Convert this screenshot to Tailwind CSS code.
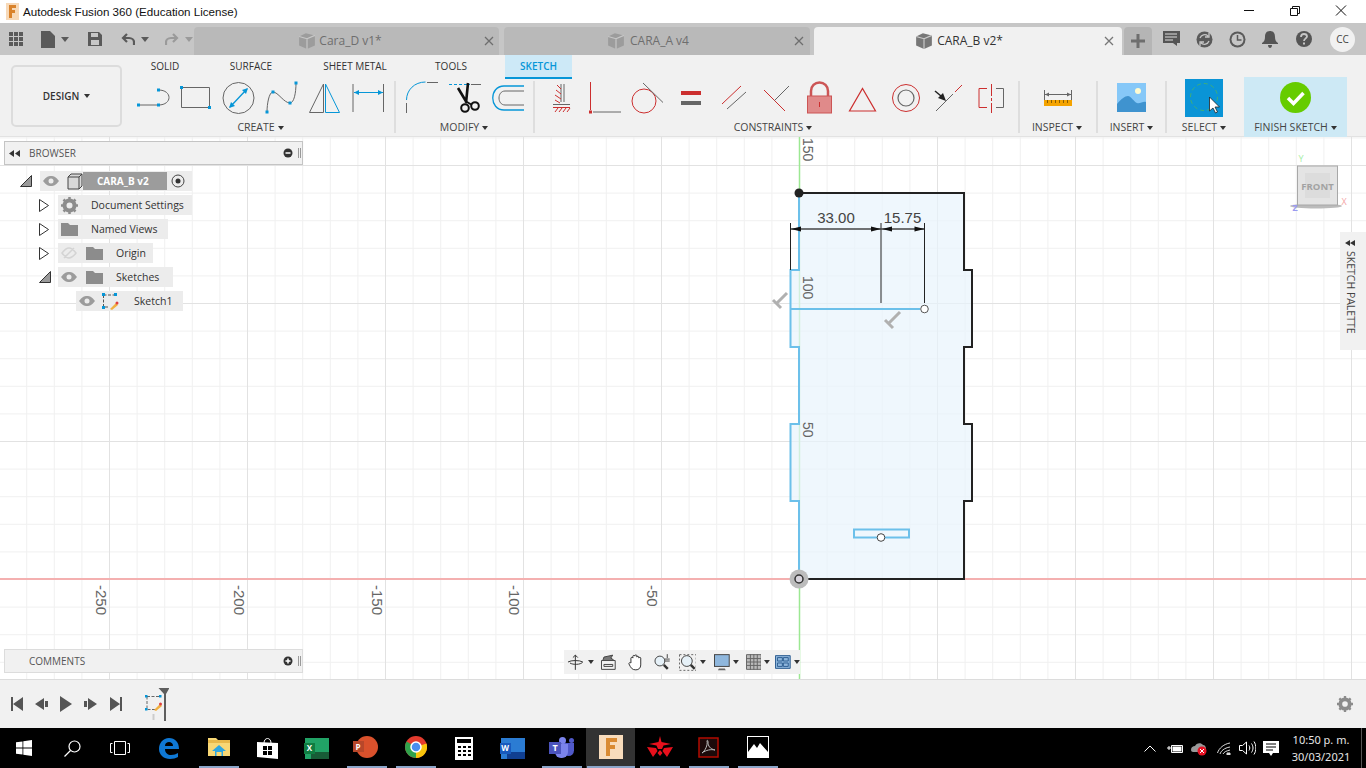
<!DOCTYPE html>
<html lang="en">
<head>
  <meta charset="UTF-8" />
  <title>Autodesk Fusion 360 (Education License)</title>
  <script src="https://cdn.jsdelivr.net/npm/@tailwindcss/browser@4"></script>
</head>
<body class="w-[1366px] h-[768px] overflow-hidden bg-white font-['Open_Sans',sans-serif] text-[#3c3c3c]">
<div class="flex flex-col h-[768px]">

  <!-- Title bar -->
  <div class="h-[23px] bg-white flex items-center shrink-0">
    <svg class="ml-[6px] w-[13px] h-[17px]" viewBox="0 0 13 17">
      <rect width="13" height="17" fill="#f7d9b8"/>
      <path d="M3 2h7v3H6v2h3v3H6v5H3z" fill="#d9822b"/>
    </svg>
    <span class="ml-[4px] text-[11.600px] text-[#111] font-['Liberation_Sans',sans-serif]">Autodesk Fusion 360 (Education License)</span>
    <div class="ml-auto mr-[2px] flex items-center">
      <svg class="w-[46px] h-[23px]" viewBox="0 0 46 23"><path d="M18 10.500h10" stroke="#111"/></svg>
      <svg class="w-[46px] h-[23px]" viewBox="0 0 46 23" fill="none" stroke="#111"><path d="M18.500 8.500h7v7h-7zM20.500 8.500v-2h7v7h-2"/></svg>
      <svg class="w-[46px] h-[23px]" viewBox="0 0 46 23" fill="none" stroke="#111"><path d="M18 5.500l10 10M28 5.500l-10 10"/></svg>
    </div>
  </div>

  <!-- Tab strip -->
  <div class="h-[32px] bg-[#c6c6c6] flex items-end shrink-0">
    <div class="w-[194px] h-[32px] flex items-center">
      <svg class="ml-[9px] w-[14px] h-[14px]" viewBox="0 0 14 14" fill="#5a5a5a"><path d="M0 0h4v4H0zM5 0h4v4H5zM10 0h4v4h-4zM0 5h4v4H0zM5 5h4v4H5zM10 5h4v4h-4zM0 10h4v4H0zM5 10h4v4H5zM10 10h4v4h-4z"/></svg>
      <svg class="ml-[18px] w-[14px] h-[17px]" viewBox="0 0 14 17" fill="#5a5a5a"><path d="M0 0h9l5 5v12H0z"/></svg>
      <svg class="ml-[6px] w-[8px] h-[5px]" viewBox="0 0 8 5" fill="#5a5a5a"><path d="M0 0h8L4 5z"/></svg>
      <svg class="ml-[19px] w-[14px] h-[14px]" viewBox="0 0 14 14" fill="#5a5a5a"><path d="M0 0h11l3 3v11H0zM3 1v4h7V1zM3 8v5h8V8z"/></svg>
      <svg class="ml-[19px] w-[14px] h-[13px]" viewBox="0 0 14 13" fill="none" stroke="#5a5a5a" stroke-width="2.200"><path d="M6 1L2 5l4 4M2 5h6c3 0 5 2 5 4v3"/></svg>
      <svg class="ml-[6px] w-[8px] h-[5px]" viewBox="0 0 8 5" fill="#5a5a5a"><path d="M0 0h8L4 5z"/></svg>
      <svg class="ml-[16px] w-[14px] h-[13px]" viewBox="0 0 14 13" fill="none" stroke="#9a9a9a" stroke-width="2.200"><path d="M8 1l4 4-4 4M12 5H6C3 5 1 7 1 9v3"/></svg>
      <svg class="ml-[6px] w-[8px] h-[5px]" viewBox="0 0 8 5" fill="#9a9a9a"><path d="M0 0h8L4 5z"/></svg>
    </div>
    <div class="w-[305px] h-[28px] pr-[13px] bg-[#b9b9b9] rounded-t-[4px] flex items-center relative justify-center">
      <svg class="w-[18px] h-[18px] mr-[3px]" viewBox="0 0 16 16"><path d="M1 4l6-3 8 2v9l-7 3-7-3z" fill="#9c9c9c"/><path d="M1 4l7 2 7-3-7 3v9" fill="none" stroke="#c8c8c8"/></svg>
      <span class="text-[12px] text-[#6e6e6e]">Cara_D v1*</span>
      <svg class="absolute right-[5px] top-[9px] w-[10px] h-[10px]" viewBox="0 0 10 10" stroke="#6e6e6e" stroke-width="1.300"><path d="M1 1l8 8M9 1l-8 8"/></svg>
    </div>
    <div class="ml-[5px] w-[306px] h-[28px] pr-[18px] bg-[#b9b9b9] rounded-t-[4px] flex items-center relative justify-center">
      <svg class="w-[18px] h-[18px] mr-[5px]" viewBox="0 0 16 16"><path d="M1 4l6-3 8 2v9l-7 3-7-3z" fill="#9c9c9c"/><path d="M1 4l7 2 7-3-7 3v9" fill="none" stroke="#c8c8c8"/></svg>
      <span class="text-[12px] text-[#6e6e6e]">CARA_A v4</span>
      <svg class="absolute right-[6px] top-[9px] w-[10px] h-[10px]" viewBox="0 0 10 10" stroke="#6e6e6e" stroke-width="1.300"><path d="M1 1l8 8M9 1l-8 8"/></svg>
    </div>
    <div class="ml-[4px] w-[308px] h-[28px] pr-[18px] bg-[#f1f1f1] rounded-t-[4px] flex items-center relative justify-center">
      <svg class="w-[18px] h-[18px] mr-[4px]" viewBox="0 0 16 16"><path d="M1 4l6-3 8 2v9l-7 3-7-3z" fill="#777"/><path d="M1 4l7 2 7-3-7 3v9" fill="none" stroke="#ccc"/></svg>
      <span class="text-[12px] text-[#333]">CARA_B v2*</span>
      <svg class="absolute right-[8px] top-[9px] w-[10px] h-[10px]" viewBox="0 0 10 10" stroke="#777" stroke-width="1.300"><path d="M1 1l8 8M9 1l-8 8"/></svg>
    </div>
    <div class="ml-[2px] w-[28px] h-[28px] bg-[#b5b5b5] rounded-t-[4px] flex items-center justify-center">
      <svg class="w-[14px] h-[14px]" viewBox="0 0 14 14" fill="#6e6e6e"><path d="M5.500 0h3v5.500H14v3H8.500V14h-3V8.500H0v-3h5.500z"/></svg>
    </div>
    <div class="h-[32px] flex items-center">
      <svg class="ml-[11px] w-[17px] h-[16px]" viewBox="0 0 17 16"><path d="M0 0h17v12h-3v3l-4-3H0z" fill="#555"/><path d="M2 3h12M2 6h12M2 9h8" stroke="#ddd"/></svg>
      <svg class="ml-[16px] w-[17px] h-[17px]" viewBox="0 0 17 17"><circle cx="8.500" cy="8.500" r="8" fill="#5a5a5a"/><path d="M4 7a5 5 0 0 1 8-2M13 10a5 5 0 0 1-8 2M13 2v4H9M4 15v-4h4" fill="none" stroke="#c6c6c6" stroke-width="1.300"/></svg>
      <svg class="ml-[16px] w-[17px] h-[17px]" viewBox="0 0 17 17"><circle cx="8.500" cy="8.500" r="8" fill="#5a5a5a"/><circle cx="8.500" cy="8.500" r="6" fill="#c6c6c6"/><path d="M8.500 4v5h4" fill="none" stroke="#5a5a5a" stroke-width="1.500"/></svg>
      <svg class="ml-[16px] w-[16px] h-[17px]" viewBox="0 0 16 17" fill="#555"><path d="M8 0c4 0 5 3 5 6 0 3 1 5 3 6v1H0v-1c2-1 3-3 3-6 0-3 1-6 5-6zM6 14h4c0 2-1 3-2 3s-2-1-2-3z"/></svg>
      <svg class="ml-[18px] w-[16px] h-[16px]" viewBox="0 0 16 16"><circle cx="8" cy="8" r="8" fill="#555"/><path d="M5 6c0-2 1.500-3 3-3s3 1 3 2.500S8 8 8 10" fill="none" stroke="#c6c6c6" stroke-width="1.800"/><rect x="7" y="11.500" width="2" height="2" fill="#c6c6c6"/></svg>
      <div class="ml-[18px] w-[25px] h-[25px] rounded-full bg-[#f1f1f1] flex items-center justify-center text-[10px] text-[#444]">CC</div>
    </div>
  </div>

  <!-- Toolbar -->
  <div class="h-[82px] bg-[#f1f1f1] flex shrink-0 border-b border-[#e2e2e2]">
    <div class="ml-[11px] mt-[10px] w-[111px] h-[62px] border-2 border-[#dcdcdc] rounded-[5px] flex items-center justify-center gap-[5px] text-[10px] font-semibold text-[#333]">
      DESIGN
      <svg class="w-[6px] h-[4px]" viewBox="0 0 6 4" fill="#333"><path d="M0 0h6L3 4z"/></svg>
    </div>
    <div class="ml-[11px] flex flex-col w-[1222px]">
      <div class="h-[24px] flex items-start text-[10px] text-[#333]">
        <div class="w-[64px] h-[22px] flex items-center justify-center">SOLID</div>
        <div class="w-[108px] h-[22px] flex items-center justify-center">SURFACE</div>
        <div class="w-[100px] h-[22px] flex items-center justify-center">SHEET METAL</div>
        <div class="w-[92px] h-[22px] flex items-center justify-center">TOOLS</div>
        <div class="ml-[8px] w-[67px] h-[24px] bg-[#cde9f7] border-b-2 border-[#0696d7] flex items-center justify-center font-semibold text-[#0696d7]">SKETCH</div>
      </div>
      <div class="flex items-start h-[58px]">

        <!-- Create -->
        <div class="w-[259px] flex flex-col items-center">
          <div class="flex h-[37px] pt-[1px]">
            <svg class="w-[42px] h-[36px]" viewBox="133 80 42 36" fill="none" stroke="#666"><path d="M139 105h19.500M158.500 90c14 0 14 15 0 15"/><path d="M137 103.500h3v3h-3zM157 103.500h3v3h-3zM157 88.500h3v3h-3z" fill="#0696d7" stroke="none"/></svg>
            <svg class="w-[41px] h-[36px]" viewBox="175 80 41 36" fill="none" stroke="#666"><path d="M181.500 87.500h28v20h-28z"/><path d="M180 86h3v3h-3zM208 106h3v3h-3z" fill="#0696d7" stroke="none"/></svg>
            <svg class="w-[45px] h-[36px]" viewBox="216 80 45 36" fill="none"><circle cx="238.500" cy="98" r="15.500" stroke="#666"/><path d="M230 107l17-18" stroke="#0696d7" stroke-width="1.300"/><path d="M229 108l2-6 4 4zM248 88l-2 6-4-4z" fill="#0696d7"/></svg>
            <svg class="w-[42px] h-[36px]" viewBox="261 80 42 36" fill="none" stroke="#666"><path d="M267 112c0-8 2-20 6-20 5 0 11 11 17 11 4 0 6-10 6-20"/><path d="M265.500 110.500h3v3h-3zM271.500 90.500h3v3h-3zM288.500 101.500h3v3h-3zM294.500 81.500h3v3h-3z" fill="#0696d7" stroke="none"/></svg>
            <svg class="w-[43px] h-[36px]" viewBox="303 80 43 36" fill="none"><path d="M309.500 112.500L323.500 84v28.500z" stroke="#666"/><path d="M325.500 84l14 28.500h-14z" stroke="#0696d7"/></svg>
            <svg class="w-[46px] h-[36px]" viewBox="346 80 46 36" fill="none"><path d="M353 84v28M383.500 84v28" stroke="#666"/><path d="M354 92.500h29" stroke="#0696d7"/><path d="M354 92.500l5-2.500v5zM383 92.500l-5-2.500v5z" fill="#0696d7"/></svg>
          </div>
          <div class="mt-[5px] mr-[4px] h-[14px] flex items-center gap-[3px] text-[10.500px] text-[#444]">CREATE <svg class="w-[6px] h-[4px]" viewBox="0 0 6 4" fill="#333"><path d="M0 0h6L3 4z"/></svg></div>
        </div>
        <div class="ml-[2px] mt-[2px] w-[2px] h-[52px] bg-[#dedede]"></div>

        <!-- Modify -->
        <div class="ml-[4px] w-[130px] flex flex-col items-center">
          <div class="flex h-[37px] pt-[1px]">
            <svg class="w-[44px] h-[36px]" viewBox="400 80 44 36" fill="none"><path d="M406.500 100c0-10 8-18 19-18" stroke="#0696d7"/><path d="M427 82.500h11M406.500 103v10" stroke="#666"/></svg>
            <svg class="w-[43px] h-[36px]" viewBox="444 80 43 36" fill="none"><path d="M449 84.500h21" stroke="#0696d7" stroke-dasharray="3 2"/><path d="M471 84.500h10" stroke="#666"/><path d="M458 88l9 15M468 83l-2 20" stroke="#111" stroke-width="2.600"/><circle cx="465" cy="108" r="3.800" stroke="#111" stroke-width="2"/><circle cx="475" cy="106" r="3.800" stroke="#111" stroke-width="2"/><path d="M467 102l5 3" stroke="#111" stroke-width="2"/></svg>
            <svg class="w-[43px] h-[36px]" viewBox="487 80 43 36" fill="none"><path d="M524 86h-20c-15 0-15 24 0 24h20" stroke="#0696d7" stroke-width="1.300"/><path d="M524 91h-19c-8 0-8 14 0 14h19" stroke="#666"/></svg>
          </div>
          <div class="mt-[5px] mr-[2px] h-[14px] flex items-center gap-[3px] text-[10.500px] text-[#444]">MODIFY <svg class="w-[6px] h-[4px]" viewBox="0 0 6 4" fill="#333"><path d="M0 0h6L3 4z"/></svg></div>
        </div>
        <div class="ml-[3px] mt-[2px] w-[2px] h-[52px] bg-[#dedede]"></div>

        <!-- Constraints -->
        <div class="ml-[5px] w-[476px] flex flex-col items-center">
          <div class="flex h-[37px] pt-[1px]">
            <svg class="w-[38px] h-[36px]" viewBox="540 80 38 36" fill="none"><path d="M561 84v18M564 84v18" stroke="#666"/><path d="M557 85l4 4M556 90l5 4M555 95l6 4M555 100l5 3" stroke="#cc2f2f"/><path d="M553 104.500h17" stroke="#666"/><path d="M553 107.500h17" stroke="#cc2f2f"/><path d="M555 112l3-4M559 112l3-4M563 112l3-4M567 112l3-4" stroke="#cc2f2f"/></svg>
            <svg class="w-[48px] h-[36px]" viewBox="578 80 48 36" fill="none"><path d="M590.500 82v28" stroke="#cc2f2f"/><path d="M593 112h28" stroke="#666"/><rect x="589" y="110.500" width="3" height="3" fill="#cc2f2f"/></svg>
            <svg class="w-[42px] h-[36px]" viewBox="626 80 42 36" fill="none"><circle cx="644" cy="101" r="12" stroke="#cc2f2f"/><path d="M643 83l20 19.500" stroke="#666"/></svg>
            <svg class="w-[44px] h-[36px]" viewBox="668 80 44 36"><rect x="681" y="91" width="20" height="4" fill="#cc2f2f"/><rect x="681" y="101" width="20" height="4" fill="#666"/></svg>
            <svg class="w-[42px] h-[36px]" viewBox="712 80 42 36" fill="none"><path d="M722 104l19-18" stroke="#cc2f2f"/><path d="M727 109l19-17" stroke="#666"/></svg>
            <svg class="w-[43px] h-[36px]" viewBox="754 80 43 36" fill="none"><path d="M764 90l21 21" stroke="#cc2f2f"/><path d="M774.500 100.500L789 86" stroke="#666"/></svg>
            <svg class="w-[45px] h-[36px]" viewBox="797 80 45 36"><path d="M811 96v-5a8.500 8.500 0 0 1 17 0v5" fill="none" stroke="#cc5555" stroke-width="2.500"/><rect x="807.500" y="96" width="24" height="17" fill="#e08a8a" stroke="#cc5555"/><path d="M819.500 102v5" stroke="#cc2f2f"/></svg>
            <svg class="w-[42px] h-[36px]" viewBox="842 80 42 36" fill="none"><path d="M849.500 111h26l-13-22.500z" stroke="#cc2f2f" stroke-width="1.200"/></svg>
            <svg class="w-[44px] h-[36px]" viewBox="884 80 44 36" fill="none"><circle cx="906" cy="98" r="13.500" stroke="#cc2f2f"/><circle cx="906" cy="98" r="8" stroke="#666" stroke-width="1.200"/></svg>
            <svg class="w-[42px] h-[36px]" viewBox="928 80 42 36" fill="none"><path d="M936 111l17-17" stroke="#666"/><path d="M955 92l7-7" stroke="#cc2f2f"/><path d="M935 91l6 5" stroke="#222" stroke-width="1.500"/><path d="M946 101l-8-3 5-5z" fill="#222"/></svg>
            <svg class="w-[46px] h-[36px]" viewBox="970 80 46 36" fill="none"><path d="M987 88.500h-8v19h8" stroke="#cc2f2f"/><path d="M996 88.500h7.500v19H996" stroke="#666"/><path d="M991.500 84v12M991.500 98v3M991.500 103v10" stroke="#cc2f2f"/></svg>
          </div>
          <div class="mt-[5px] mr-[10px] h-[14px] flex items-center gap-[3px] text-[10.500px] text-[#444]">CONSTRAINTS <svg class="w-[6px] h-[4px]" viewBox="0 0 6 4" fill="#333"><path d="M0 0h6L3 4z"/></svg></div>
        </div>
        <div class="ml-[2px] mt-[2px] w-[2px] h-[52px] bg-[#dedede]"></div>

        <!-- Inspect -->
        <div class="w-[76px] flex flex-col items-center">
          <div class="flex h-[37px] pt-[1px]">
            <svg class="w-[36px] h-[36px]" viewBox="1040 80 36 36" fill="none"><path d="M1044.500 90v10M1071.500 90v10" stroke="#666"/><path d="M1045 94.500h26" stroke="#666"/><path d="M1045 94.500l4-2v4zM1071 94.500l-4-2v4z" fill="#666"/><rect x="1044" y="100" width="28" height="6" fill="#f4a300"/><path d="M1047.500 100v3M1051.500 100v3M1055.500 100v3M1059.500 100v3M1063.500 100v3M1067.500 100v3" stroke="#8a5d00"/></svg>
          </div>
          <div class="mt-[5px] mr-[2px] h-[14px] flex items-center gap-[3px] text-[10.500px] text-[#444]">INSPECT <svg class="w-[6px] h-[4px]" viewBox="0 0 6 4" fill="#333"><path d="M0 0h6L3 4z"/></svg></div>
        </div>
        <div class="mt-[2px] w-[2px] h-[52px] bg-[#dedede]"></div>

        <!-- Insert -->
        <div class="w-[67px] flex flex-col items-center">
          <div class="flex h-[37px] pt-[1px]">
            <svg class="w-[36px] h-[36px]" viewBox="1114 80 36 36"><rect x="1117" y="83" width="29" height="29" fill="#86c8f8"/><circle cx="1138" cy="91" r="3" fill="#fffbd0"/><path d="M1117 104c4-5 8-8 11-8s6 6 9 7 6-2 9-1v10h-29z" fill="#3f93cf"/></svg>
          </div>
          <div class="mt-[5px] h-[14px] flex items-center gap-[3px] text-[10.500px] text-[#444]">INSERT <svg class="w-[6px] h-[4px]" viewBox="0 0 6 4" fill="#333"><path d="M0 0h6L3 4z"/></svg></div>
        </div>
        <div class="mt-[2px] w-[2px] h-[52px] bg-[#dedede]"></div>

        <!-- Select -->
        <div class="w-[74px] flex flex-col items-center">
          <svg class="w-[38px] h-[38px]" viewBox="1185 79 38 38"><rect x="1185" y="79" width="38" height="38" fill="#0a94d6"/><circle cx="1204" cy="97" r="13.500" fill="none" stroke="#3fae7a" stroke-dasharray="4 3"/><path d="M1209.500 97v14l3.500-3 2.500 5 2-1-2.500-5h4.500z" fill="#fff" stroke="#222" stroke-width=".8"/></svg>
          <div class="mt-[4px] h-[14px] flex items-center gap-[3px] text-[10.500px] text-[#444]">SELECT <svg class="w-[6px] h-[4px]" viewBox="0 0 6 4" fill="#333"><path d="M0 0h6L3 4z"/></svg></div>
        </div>

        <!-- Finish sketch -->
        <div class="ml-[3px] -mt-[2px] w-[103px] h-[60px] bg-[#cde9f5] flex flex-col items-center">
          <svg class="mt-[5px] w-[31px] h-[31px]" viewBox="0 0 31 31"><circle cx="15.500" cy="15.500" r="15.500" fill="#66cc00"/><path d="M8 16l5.500 5.500L23.500 11" fill="none" stroke="#fff" stroke-width="3.500"/></svg>
          <div class="mt-[8px] h-[14px] flex items-center gap-[3px] text-[10.500px] text-[#444]">FINISH SKETCH <svg class="w-[6px] h-[4px]" viewBox="0 0 6 4" fill="#333"><path d="M0 0h6L3 4z"/></svg></div>
        </div>
      </div>
    </div>
  </div>

  <!-- Canvas -->
  <div class="relative flex-1 bg-white overflow-hidden">
    <svg class="absolute inset-0 w-[1366px] h-[542px]" viewBox="0 137 1366 542">
      <defs>
        <pattern id="minor" x="109" y="27" width="27.600" height="27.600" patternUnits="userSpaceOnUse">
          <path d="M0.500 0V27.600M0 0.500H27.600" fill="none" stroke="#f0f0f0"/>
        </pattern>
        <pattern id="major" x="109" y="27" width="138" height="138" patternUnits="userSpaceOnUse">
          <path d="M0.500 0V138M0 0.500H138" fill="none" stroke="#e2e2e2"/>
        </pattern>
      </defs>
      <rect x="0" y="137" width="1366" height="542" fill="url(#minor)"/>
      <rect x="0" y="137" width="1366" height="542" fill="url(#major)"/>

      <path d="M799.500 137V679" stroke="#9ce892" stroke-width="1.500"/>
      <path d="M0 579H1366" stroke="#f4b0b0" stroke-width="2"/>

      <path d="M799 193H964V270H972V347H964V424H972V501H964V579H799V501H790V424H799V347H790V270H799Z" fill="#e8f4fc" fill-opacity=".7"/>
      <path d="M799 193H964V270H972V347H964V424H972V501H964V579H799" fill="none" stroke="#222" stroke-width="2"/>
      <path d="M799 193V270H790.500V347H799V424H790.500V501H799V579" fill="none" stroke="#6cc0ea" stroke-width="2"/>
      <path d="M791 309H920" stroke="#6cc0ea" stroke-width="2"/>
      <rect x="854" y="529.500" width="55" height="8" fill="none" stroke="#6cc0ea" stroke-width="2"/>
      <circle cx="924.500" cy="309" r="3.800" fill="#fff" stroke="#555"/>
      <circle cx="881" cy="537.500" r="3.800" fill="#fff" stroke="#444"/>

      <!-- dimensions -->
      <path d="M790.500 223V270M881 223V303M924.500 223V303" stroke="#222"/>
      <path d="M791 229H924" stroke="#444" stroke-width="1.400"/>
      <path d="M791 229l10-2.500v5zM881 229l-10-2.500v5zM882 229l10-2.500v5zM924.500 229l-10-2.500v5z" fill="#111"/>
      <text x="836" y="223" text-anchor="middle" font-family="Liberation Sans" font-size="15" fill="#444">33.00</text>
      <text x="902.500" y="223" text-anchor="middle" font-family="Liberation Sans" font-size="15" fill="#444">15.75</text>
      <text transform="translate(803 276) rotate(90)" font-family="Liberation Sans" font-size="14" fill="#666">100</text>
      <text transform="translate(803 422) rotate(90)" font-family="Liberation Sans" font-size="14" fill="#666">50</text>
      <text transform="translate(803 138) rotate(90)" font-family="Liberation Sans" font-size="14" fill="#666">150</text>

      <!-- horizontal constraint glyphs -->
      <path d="M776 304l11-11M773 300l8 8" stroke="#b0b0b0" stroke-width="3" fill="none"/>
      <path d="M889 323l11-11M885 320l8 8" stroke="#b0b0b0" stroke-width="3" fill="none"/>

      <!-- origin and start point -->
      <circle cx="799" cy="579" r="9.500" fill="#bcbcbc"/>
      <circle cx="799" cy="579" r="4" fill="#d8d4dc" stroke="#333" stroke-width="1.500"/>
      <circle cx="799" cy="193" r="4.500" fill="#222"/>

      <!-- axis numbers -->
      <g font-family="Liberation Sans" font-size="15" fill="#666">
        <text transform="translate(96 585) rotate(90)">-250</text>
        <text transform="translate(234 585) rotate(90)">-200</text>
        <text transform="translate(372 585) rotate(90)">-150</text>
        <text transform="translate(509 585) rotate(90)">-100</text>
        <text transform="translate(647 585) rotate(90)">-50</text>
      </g>

      <!-- view cube -->
      <ellipse cx="1316" cy="206" rx="26" ry="2.500" fill="#bbb"/>
      <rect x="1297.500" y="166" width="40" height="39" fill="#e4e4e4" stroke="#a8a8a8"/>
      <rect x="1305" y="173" width="25" height="25" fill="#dcdcdc"/>
      <text x="1317.500" y="189.500" text-anchor="middle" font-family="Open Sans" font-weight="700" font-size="9.500" fill="#a2a2a2">FRONT</text>
      <text x="1301" y="162" text-anchor="middle" font-family="Open Sans" font-size="9" fill="#a6eea6">Y</text>
      <text x="1344" y="205" text-anchor="middle" font-family="Open Sans" font-size="9" fill="#f4a6a6">X</text>
      <text x="1295" y="211" text-anchor="middle" font-family="Open Sans" font-weight="700" font-size="9" fill="#9a9af0">Z</text>
    </svg>

    <!-- Browser panel -->
    <div class="absolute left-[4px] top-[4px] w-[299px] flex flex-col">
      <div class="h-[24px] bg-[#f1f1f1] border border-[#c4c4c4] flex items-center text-[10px] text-[#555]">
        <svg class="ml-[4px] w-[11px] h-[7px]" viewBox="0 0 11 7" fill="#333"><path d="M5 0v7L0 3.500zM11 0v7L6 3.500z"/></svg>
        <span class="ml-[9px]">BROWSER</span>
        <svg class="ml-auto w-[10px] h-[10px]" viewBox="0 0 10 10"><circle cx="5" cy="5" r="4.500" fill="#333"/><path d="M2.500 5h5" stroke="#fff" stroke-width="1.500"/></svg>
        <div class="ml-[5px] mr-[1px] w-[3px] h-[10px] border-x border-[#999]"></div>
      </div>
      <div class="mt-[6px] flex flex-col gap-[4px] text-[10.500px] text-[#333]">
        <div class="flex items-center h-[20px] ml-[16px]">
          <svg class="w-[12px] h-[12px]" viewBox="0 0 12 12"><path d="M0.500 11.500h11V.500z" fill="#9a9a9a" stroke="#333"/></svg>
          <div class="ml-[8px] w-[152px] h-[20px] bg-[#ececec] flex items-center">
            <svg class="ml-[3px] w-[16px] h-[10px]" viewBox="0 0 16 10" fill="#9c9c9c"><path d="M0 5c3-4 5-5 8-5s5 1 8 5c-3 4-5 5-8 5s-5-1-8-5z"/><circle cx="8" cy="5" r="2.500" fill="#ececec"/></svg>
            <div class="ml-[6px] w-[102px] h-[18px] bg-[#9c9c9c] flex items-center">
              <svg class="w-[18px] h-[18px]" viewBox="0 0 18 18"><rect width="18" height="18" fill="#ececec"/><path d="M3 5l3-3h11v12l-3 3H3z" fill="#d8d8d8" stroke="#444"/><path d="M3 5h11v12M14 5l3-3" fill="none" stroke="#444"/></svg>
              <span class="ml-[14px] font-bold text-white text-[10px]">CARA_B v2</span>
            </div>
            <svg class="ml-[4px] w-[14px] h-[14px]" viewBox="0 0 14 14" fill="none"><circle cx="7" cy="7" r="6" stroke="#444"/><circle cx="7" cy="7" r="2.500" fill="#333"/></svg>
          </div>
        </div>
        <div class="flex items-center h-[20px] ml-[35px]">
          <svg class="w-[11px] h-[13px]" viewBox="0 0 11 13"><path d="M.5.500l9 6-9 6z" fill="#fff" stroke="#333"/></svg>
          <div class="ml-[8px] w-[134px] h-[20px] bg-[#ececec] flex items-center">
            <svg class="ml-[3px] w-[17px] h-[17px]" viewBox="0 0 17 17"><circle cx="8.500" cy="8.500" r="5" fill="none" stroke="#8c8c8c" stroke-width="4"/><path d="M8.500 0v3M8.500 14v3M0 8.500h3M14 8.500h3M2.500 2.500l2 2M12.500 12.500l2 2M14.500 2.500l-2 2M4.500 12.500l-2 2" stroke="#8c8c8c" stroke-width="2.500"/></svg>
            <span class="ml-[13px] pt-[1px]">Document Settings</span>
          </div>
        </div>
        <div class="flex items-center h-[20px] ml-[35px]">
          <svg class="w-[11px] h-[13px]" viewBox="0 0 11 13"><path d="M.5.500l9 6-9 6z" fill="#fff" stroke="#333"/></svg>
          <div class="ml-[8px] w-[110px] h-[20px] bg-[#ececec] flex items-center">
            <svg class="ml-[3px] w-[17px] h-[13px]" viewBox="0 0 17 13" fill="#8c8c8c"><path d="M0 0h7l2 2h8v11H0z"/></svg>
            <span class="ml-[13px] pt-[1px]">Named Views</span>
          </div>
        </div>
        <div class="flex items-center h-[20px] ml-[35px]">
          <svg class="w-[11px] h-[13px]" viewBox="0 0 11 13"><path d="M.5.500l9 6-9 6z" fill="#fff" stroke="#333"/></svg>
          <div class="ml-[8px] w-[95px] h-[20px] bg-[#ececec] flex items-center">
            <svg class="ml-[3px] w-[16px] h-[12px]" viewBox="0 0 16 12" fill="none" stroke="#d4d4d4" stroke-width="1.500"><path d="M1 6c3-4 5-5 7-5s4 1 7 5c-3 4-5 5-7 5s-4-1-7-5zM3 11L13 1"/></svg>
            <svg class="ml-[9px] w-[17px] h-[13px]" viewBox="0 0 17 13" fill="#8c8c8c"><path d="M0 0h7l2 2h8v11H0z"/></svg>
            <span class="ml-[13px] pt-[1px]">Origin</span>
          </div>
        </div>
        <div class="flex items-center h-[20px] ml-[35px]">
          <svg class="w-[12px] h-[12px]" viewBox="0 0 12 12"><path d="M0.500 11.500h11V.500z" fill="#9a9a9a" stroke="#333"/></svg>
          <div class="ml-[7px] w-[115px] h-[20px] bg-[#ececec] flex items-center">
            <svg class="ml-[3px] w-[16px] h-[10px]" viewBox="0 0 16 10" fill="#9c9c9c"><path d="M0 5c3-4 5-5 8-5s5 1 8 5c-3 4-5 5-8 5s-5-1-8-5z"/><circle cx="8" cy="5" r="2.500" fill="#ececec"/></svg>
            <svg class="ml-[9px] w-[17px] h-[13px]" viewBox="0 0 17 13" fill="#8c8c8c"><path d="M0 0h7l2 2h8v11H0z"/></svg>
            <span class="ml-[13px] pt-[1px]">Sketches</span>
          </div>
        </div>
        <div class="flex items-center h-[20px] ml-[72px]">
          <div class="w-[107px] h-[20px] bg-[#ececec] flex items-center">
            <svg class="ml-[3px] w-[16px] h-[10px]" viewBox="0 0 16 10" fill="#9c9c9c"><path d="M0 5c3-4 5-5 8-5s5 1 8 5c-3 4-5 5-8 5s-5-1-8-5z"/><circle cx="8" cy="5" r="2.500" fill="#ececec"/></svg>
            <svg class="ml-[7px] w-[17px] h-[17px]" viewBox="0 0 17 17" fill="none"><path d="M1.500 2h12M1.500 2v12h6" stroke="#555" stroke-dasharray="3 1.500"/><path d="M0 0h3v3H0zM12 0h3v3h-3zM0 13h3v3H0z" fill="#0696d7"/><path d="M8 16l6-6 2 2-6 5z" fill="#f0b040"/><circle cx="15" cy="10" r="1.500" fill="#e04040"/></svg>
            <span class="ml-[15px] pt-[1px]">Sketch1</span>
          </div>
        </div>
      </div>
    </div>

    <!-- Comments panel -->
    <div class="absolute left-[4px] top-[512px] w-[299px] h-[24px] bg-[#f1f1f1] border border-[#dcdcdc] flex items-center text-[10px] text-[#555]">
      <span class="ml-[24px]">COMMENTS</span>
      <svg class="ml-auto w-[10px] h-[10px]" viewBox="0 0 10 10"><circle cx="5" cy="5" r="4.500" fill="#333"/><path d="M2.500 5h5M5 2.500v5" stroke="#fff" stroke-width="1.500"/></svg>
      <div class="ml-[5px] mr-[1px] w-[3px] h-[10px] border-x border-[#999]"></div>
    </div>

    <!-- Navigation bar -->
    <div class="absolute left-[564px] top-[513px] w-[236px] h-[24px] bg-[#f1f1f1] flex items-center">
      <svg class="ml-[3px] w-[17px] h-[17px]" viewBox="0 0 17 17" fill="none" stroke="#333"><path d="M8.500 1v15M6 3.500L8.500 1 11 3.500M1 8c3-2 12-2 15 0-2 3-10 3-13 1"/></svg>
      <svg class="ml-[4px] w-[6px] h-[4px]" viewBox="0 0 6 4" fill="#333"><path d="M0 0h6L3 4z"/></svg>
      <svg class="ml-[6px] w-[17px] h-[16px]" viewBox="0 0 17 16" fill="none" stroke="#444"><path d="M1.500 6.500h14v9h-14zM4 10.500h9v2H4z"/><path d="M3 6l1-3 9-2-2 3 3 2" fill="#777"/></svg>
      <svg class="ml-[11px] w-[17px] h-[17px]" viewBox="0 0 17 17" fill="#fff" stroke="#333"><path d="M4 9V4c0-1 2-1 2 0V2c0-1 2-1 2 0v-.500c0-1 2-1 2 0V3c0-1 2-1 2 0v1c0-1 2-1 2 0v7c0 3-2 5-5 5-4 0-5-2-7-6-.5-1 1-2 2-1z"/></svg>
      <svg class="ml-[10px] w-[18px] h-[17px]" viewBox="0 0 18 17" fill="none"><circle cx="6" cy="7" r="5" fill="#e6f1f8" stroke="#444"/><path d="M10 11l4 4" stroke="#333" stroke-width="2.500"/><path d="M11 5h5M13.500 0v4M11 7h5" stroke="#444"/></svg>
      <svg class="ml-[7px] w-[18px] h-[17px]" viewBox="0 0 18 17" fill="none"><path d="M.5.500h17v16H.5z" stroke="#666" stroke-dasharray="2 2"/><circle cx="8" cy="7" r="5.500" fill="#e6f1f8" stroke="#444"/><path d="M12 11l4 4" stroke="#333" stroke-width="2.500"/></svg>
      <svg class="ml-[4px] w-[6px] h-[4px]" viewBox="0 0 6 4" fill="#333"><path d="M0 0h6L3 4z"/></svg>
      <svg class="ml-[8px] w-[16px] h-[17px]" viewBox="0 0 16 17"><rect x=".5" y=".5" width="15" height="12" fill="#8fb7dd" stroke="#444"/><path d="M5 14.500h6l1 2H4z" fill="#666"/></svg>
      <svg class="ml-[3px] w-[6px] h-[4px]" viewBox="0 0 6 4" fill="#333"><path d="M0 0h6L3 4z"/></svg>
      <svg class="ml-[7px] w-[16px] h-[16px]" viewBox="0 0 16 16" fill="#bbb" stroke="#666"><path d="M.5.500h15v15H.5zM4.500 0v16M8 0v16M11.500 0v16M0 4.500h16M0 8h16M0 11.500h16"/></svg>
      <svg class="ml-[3px] w-[6px] h-[4px]" viewBox="0 0 6 4" fill="#333"><path d="M0 0h6L3 4z"/></svg>
      <svg class="ml-[5px] w-[16px] h-[14px]" viewBox="0 0 16 14" fill="#8fb7dd" stroke="#2f5f92"><path d="M.5.500h15v13H.5z"/><path d="M2.500 2.500h5v3.500h-5zM8.500 2.500h5v3.500h-5zM2.500 8h5v3.500h-5zM8.500 8h5v3.500h-5z"/></svg>
      <svg class="ml-[3px] w-[6px] h-[4px]" viewBox="0 0 6 4" fill="#333"><path d="M0 0h6L3 4z"/></svg>
    </div>

    <!-- Sketch palette tab -->
    <div class="absolute right-0 top-[95px] w-[26px] h-[118px] pr-[6px] bg-[#f1f1f1] flex flex-col items-center pt-[8px]">
      <svg class="w-[10px] h-[6px]" viewBox="0 0 10 6" fill="#333"><path d="M5 0v6L0 3zM10 0v6L5 3z"/></svg>
      <span class="mt-[5px] [writing-mode:vertical-rl] text-[10.500px] text-[#444]">SKETCH PALETTE</span>
    </div>
  </div>

  <!-- Timeline -->
  <div class="h-[49px] bg-[#f1f1f1] border-t border-[#dcdcdc] flex items-center shrink-0">
    <svg class="ml-[11px] w-[12px] h-[14px]" viewBox="0 0 12 14" fill="#555"><path d="M0 0h2v14H0zM12 0v14L2 7z"/></svg>
    <svg class="ml-[12px] w-[13px] h-[12px]" viewBox="0 0 13 12" fill="#555"><path d="M0 6l9-6v12zM10 3h3v6h-3z"/></svg>
    <svg class="ml-[12px] w-[12px] h-[16px]" viewBox="0 0 12 16" fill="#555"><path d="M0 0l12 8-12 8z"/></svg>
    <svg class="ml-[12px] w-[13px] h-[12px]" viewBox="0 0 13 12" fill="#555"><path d="M13 6L4 0v12zM0 3h3v6H0z"/></svg>
    <svg class="ml-[13px] w-[12px] h-[14px]" viewBox="0 0 12 14" fill="#555"><path d="M10 0h2v14h-2zM0 0v14l10-7z"/></svg>
    <svg class="ml-[23px] w-[24px] h-[33px]" viewBox="0 0 24 33" fill="none">
      <path d="M2 8.500h14M2 8.500v13h8" stroke="#666" stroke-dasharray="3 1.500"/>
      <path d="M0 7h2.500v2.500H0zM14 7h2.500v2.500H14zM0 20h2.500v2.500H0z" fill="#0696d7"/>
      <path d="M9 22l6-6 2 2-6 5z" fill="#f0b040"/><circle cx="15.500" cy="16" r="1.500" fill="#e04040"/>
      <path d="M8.500 26v6" stroke="#ccc" stroke-width="2"/>
      <path d="M14.500 0h11l-3.500 6v27h-2V6z" fill="#5e5e5e" transform="translate(-1)"/>
    </svg>
    <svg class="ml-auto mr-[13px] w-[16px] h-[16px]" viewBox="0 0 17 17"><circle cx="8.500" cy="8.500" r="5" fill="none" stroke="#8c8c8c" stroke-width="4"/><path d="M8.500 0v3M8.500 14v3M0 8.500h3M14 8.500h3M2.500 2.500l2 2M12.500 12.500l2 2M14.500 2.500l-2 2M4.500 12.500l-2 2" stroke="#8c8c8c" stroke-width="2.500"/></svg>
  </div>

  <!-- Taskbar -->
  <div class="h-[40px] bg-black flex shrink-0 text-white">
    <div class="w-[48px] flex items-center justify-center">
      <svg class="w-[16px] h-[16px]" viewBox="0 0 16 16" fill="#fff"><path d="M0 2.300l6.500-.9v6.200H0zM7.300 1.300L16 0v7.600H7.300zM0 8.400h6.500v6.200L0 13.700zM7.300 8.400H16V16l-8.700-1.300z"/></svg>
    </div>
    <div class="w-[48px] flex items-center justify-center">
      <svg class="w-[17px] h-[17px]" viewBox="0 0 17 17" fill="none" stroke="#fff" stroke-width="1.200"><circle cx="10.500" cy="6.500" r="5.500"/><path d="M6.500 10.500L.5 16.500"/></svg>
    </div>
    <div class="w-[48px] flex items-center justify-center">
      <svg class="w-[20px] h-[14px]" viewBox="0 0 20 14" fill="none" stroke="#fff"><path d="M4.500.5h11v13h-11zM2.500 2.500H.5v9h2M17.500 2.500h2v9h-2"/></svg>
    </div>
    <div class="w-[50px] flex flex-col items-center">
      <div class="flex-1 flex items-center justify-center">
        <svg class="w-[20px] h-[21px]" viewBox="0 0 20 21"><path d="M10 0c6 0 10 4 10 11H6c0 4 3 6 6 6 3 0 5-1 7-2v4c-2 1-5 2-8 2-6 0-11-4-11-10S4 0 10 0zM6 8h8c0-3-2-4-4-4S6 5 6 8z" fill="#0f78d4"/></svg>
      </div>
    </div>
    <div class="w-[49px] flex flex-col items-center">
      <div class="flex-1 flex items-center justify-center">
        <svg class="w-[22px] h-[18px]" viewBox="0 0 22 18"><path d="M0 0h8l2 2h12v16H0z" fill="#f8d775"/><path d="M0 2h22v3H0z" fill="#e8b84a"/><path d="M4 13L11 7l7 6h-3v5H7v-5z" fill="#2fa6e0"/><rect x="8.500" y="14" width="5" height="4" fill="#f8d775"/></svg>
      </div>
      <div class="w-[40px] h-[2px] bg-[#8ba5c9]"></div>
    </div>
    <div class="w-[49px] flex flex-col items-center">
      <div class="flex-1 flex items-center justify-center">
        <svg class="w-[21px] h-[21px]" viewBox="0 0 21 21"><path d="M7 5c0-6 7-6 7 0" fill="none" stroke="#fff"/><path d="M0 4l21 1v16L0 19z" fill="#fff"/><path d="M6 8h4v4H6zM11 8h4v4h-4zM6 13h4v4H6zM11 13h4v4h-4z" fill="#000"/></svg>
      </div>
    </div>
    <div class="w-[50px] flex flex-col items-center">
      <div class="flex-1 flex items-center justify-center">
        <div class="relative w-[24px] h-[21px] bg-[#21a366]">
          <div class="absolute left-[6px] top-[14px] w-[18px] h-[7px] bg-[#185c37]"></div>
          <div class="absolute -left-[1px] top-[5px] w-[11px] h-[11px] bg-[#107c41] text-[8px] font-bold flex items-center justify-center">X</div>
        </div>
      </div>
    </div>
    <div class="w-[49px] flex flex-col items-center">
      <div class="flex-1 flex items-center justify-center">
        <div class="relative w-[22px] h-[22px] rounded-full bg-[#d9512c]">
          <div class="absolute -left-[3px] top-[5px] w-[11px] h-[11px] bg-[#b7472a] text-[8px] font-bold flex items-center justify-center">P</div>
        </div>
      </div>
      <div class="w-[40px] h-[2px] bg-[#8ba5c9]"></div>
    </div>
    <div class="w-[49px] flex flex-col items-center">
      <div class="flex-1 flex items-center justify-center">
        <svg class="w-[22px] h-[22px]" viewBox="0 0 22 22"><circle cx="11" cy="11" r="11" fill="#e33b2e"/><path d="M11 11L21.500 7.500A11 11 0 0 1 11 22z" fill="#f9c50c"/><path d="M11 11L11 22A11 11 0 0 1 1.500 5.500z" fill="#30a24c"/><circle cx="11" cy="11" r="5" fill="#4a8ef0" stroke="#fff" stroke-width="1.500"/></svg>
      </div>
      <div class="w-[40px] h-[2px] bg-[#8ba5c9]"></div>
    </div>
    <div class="w-[48px] flex items-center justify-center">
      <svg class="w-[18px] h-[23px]" viewBox="0 0 18 23"><rect width="18" height="23" fill="#fff"/><rect x="2" y="2" width="14" height="4" fill="#000"/><path d="M3 9h3v2H3zM8 9h3v2H8zM13 9h3v2h-3zM3 13h3v2H3zM8 13h3v2H8zM13 13h3v2h-3zM3 17h3v2H3zM8 17h3v2H8zM13 17h3v2h-3z" fill="#000"/></svg>
    </div>
    <div class="w-[49px] flex items-center justify-center">
      <div class="relative w-[24px] h-[21px] bg-[#2b7cd3]">
        <div class="absolute left-[6px] top-[14px] w-[18px] h-[7px] bg-[#103f91]"></div>
        <div class="absolute -left-[1px] top-[5px] w-[11px] h-[11px] bg-[#185abd] text-[8px] font-bold flex items-center justify-center">W</div>
      </div>
    </div>
    <div class="w-[49px] flex flex-col items-center">
      <div class="flex-1 flex items-center justify-center">
        <div class="relative w-[25px] h-[21px]">
          <div class="absolute right-0 top-[6px] w-[11px] h-[13px] rounded-b-[6px] bg-[#5059c9]"></div>
          <div class="absolute left-[6px] top-[7px] w-[13px] h-[14px] rounded-b-[6px] bg-[#7b83eb]"></div>
          <div class="absolute left-[10px] top-0 w-[7px] h-[7px] rounded-full bg-[#7b83eb]"></div>
          <div class="absolute right-0 top-[1px] w-[5px] h-[5px] rounded-full bg-[#5059c9]"></div>
          <div class="absolute left-0 top-[5px] w-[12px] h-[12px] bg-[#4b53bc] text-[9px] font-bold flex items-center justify-center">T</div>
        </div>
      </div>
      <div class="w-[40px] h-[2px] bg-[#8ba5c9]"></div>
    </div>
    <div class="w-[49px] flex flex-col items-center bg-[#333]">
      <div class="flex-1 flex items-center justify-center">
        <svg class="w-[24px] h-[24px]" viewBox="0 0 24 24"><rect width="24" height="24" fill="#f8dcbc"/><path d="M7 3h11v4h-7v3h5v4h-5v7H7z" fill="#d98a32"/></svg>
      </div>
      <div class="w-[48px] h-[2px] bg-[#8ba5c9]"></div>
    </div>
    <div class="w-[49px] flex flex-col items-center">
      <div class="flex-1 flex items-center justify-center">
        <svg class="w-[26px] h-[22px]" viewBox="0 0 26 22" fill="#e8101c"><path d="M13 0l1.500 6L24 8l-7.500 1.500L15 13h-4L9.500 9.500 2 8l9.500-2z"/><path d="M0 11l9 1 1.500 3L6 21zM26 11l-9 1-1.500 3L20 21zM13 14l2.500 3-2.500 3-2.500-3z"/></svg>
      </div>
      <div class="w-[40px] h-[2px] bg-[#8ba5c9]"></div>
    </div>
    <div class="w-[49px] flex flex-col items-center">
      <div class="flex-1 flex items-center justify-center">
        <svg class="w-[21px] h-[21px]" viewBox="0 0 21 21" fill="none"><rect x="1" y="1" width="19" height="19" fill="#1c0a0a" stroke="#b30b00" stroke-width="1.500"/><path d="M4 16c3-2 6-8 5-12 0-1 1-1 1 1 0 4 2 7 7 8-4-1-9 0-13 3z" stroke="#bbb"/></svg>
      </div>
      <div class="w-[40px] h-[2px] bg-[#8ba5c9]"></div>
    </div>
    <div class="w-[49px] flex flex-col items-center">
      <div class="flex-1 flex items-center justify-center">
        <svg class="w-[22px] h-[22px]" viewBox="0 0 22 22"><rect x=".5" y=".5" width="21" height="21" fill="#000" stroke="#fff"/><path d="M1 16l6-8 3 4 3-5 8 9v5H1z" fill="#fff"/></svg>
      </div>
      <div class="w-[40px] h-[2px] bg-[#8ba5c9]"></div>
    </div>

    <!-- Tray -->
    <div class="ml-auto flex items-center">
      <svg class="w-[12px] h-[7px]" viewBox="0 0 12 7" fill="none" stroke="#fff"><path d="M.5 6.500L6 1l5.500 5.500"/></svg>
      <svg class="ml-[11px] w-[16px] h-[11px]" viewBox="0 0 16 11" fill="none" stroke="#fff"><path d="M4.500 2.500h11v7h-11zM0 5h4M2 3v4"/><rect x="6" y="4" width="8" height="4" fill="#fff"/></svg>
      <svg class="ml-[7px] w-[17px] h-[15px]" viewBox="0 0 17 15"><path d="M1 9c0-3 2-4 4-4 1-3 6-4 8-1 2 0 3 2 3 4v3H3C2 11 1 10 1 9z" fill="#999"/><circle cx="12" cy="10" r="4.500" fill="#e81123"/><path d="M10 8l4 4M14 8l-4 4" stroke="#fff"/></svg>
      <svg class="ml-[10px] w-[14px] h-[13px]" viewBox="0 0 14 13" fill="none" stroke="#ddd"><path d="M.5 11C2 6 7 2 13 1M3 12c1-3 4-6 10-7M6 12c1-2 3-3 7-4"/><path d="M10 11h3v2h-3z" fill="#ddd"/></svg>
      <svg class="ml-[8px] w-[17px] h-[14px]" viewBox="0 0 17 14" fill="none" stroke="#fff"><path d="M.5 4.500h3L7.500 1v12l-4-3.500h-3zM10 4.500c1 1.500 1 3.500 0 5M12.500 2.500c2 3 2 6 0 9M15 .5c2.500 4 2.500 9 0 13"/></svg>
      <svg class="ml-[7px] w-[16px] h-[15px]" viewBox="0 0 16 15"><path d="M0 0h16v12h-6l-2 3-2-3H0z" fill="#fff"/><path d="M3 3h10M3 6h10M3 9h7" stroke="#000"/></svg>
      <div class="ml-[11px] w-[62px] flex flex-col items-center text-[11px] leading-[17px] font-['Noto_Sans',sans-serif] text-[#e6e6e6]">
        <span>10:50 p. m.</span>
        <span>30/03/2021</span>
      </div>
      <div class="ml-[9px] mr-[4px] w-[1px] h-[40px] bg-[#555]"></div>
    </div>
  </div>
</div>
</body>
</html>
